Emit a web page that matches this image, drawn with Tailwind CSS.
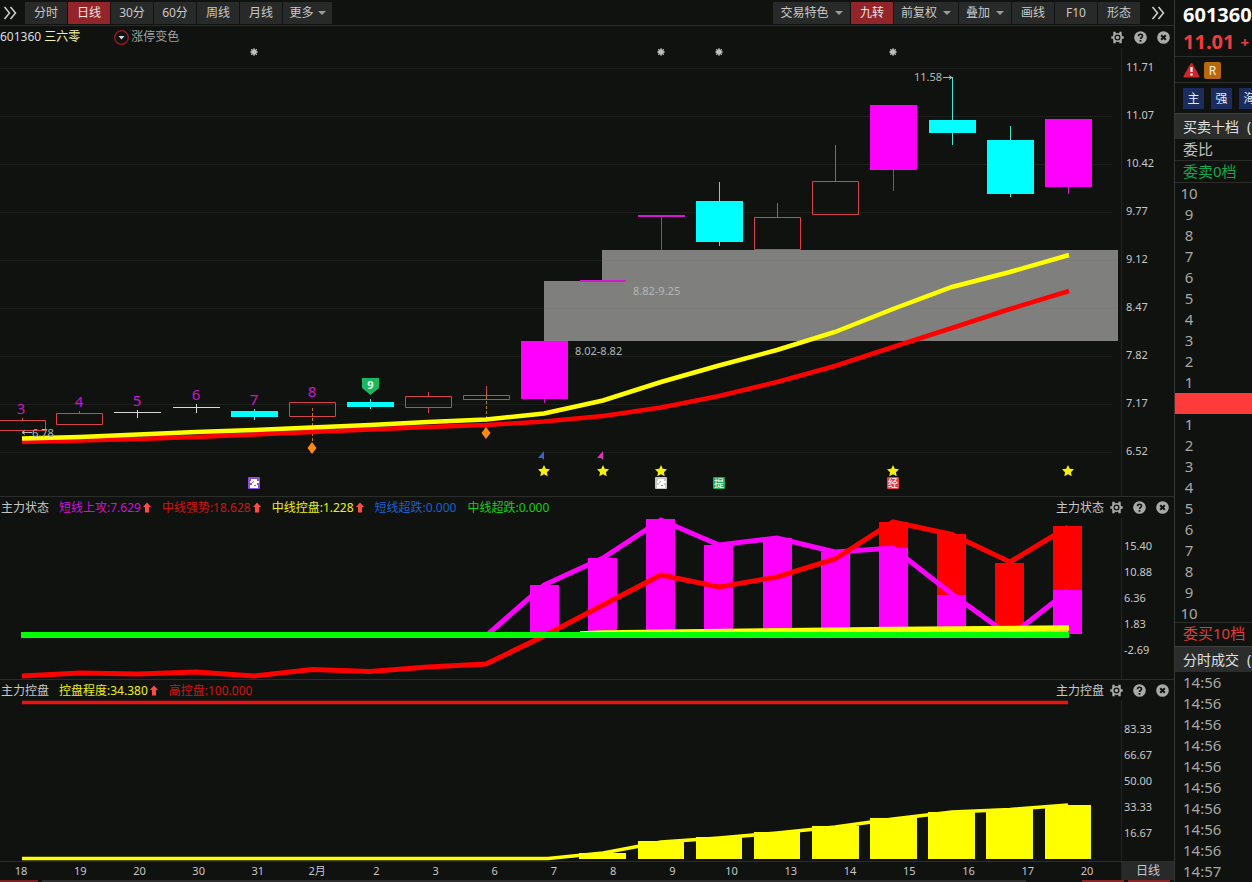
<!DOCTYPE html>
<html lang="zh-CN">
<head>
<meta charset="utf-8">
<meta name="viewport" content="width=device-width, initial-scale=1">
<title>601360 三六零 日线</title>
<script src="https://cdn.jsdelivr.net/npm/@tailwindcss/browser@4"></script>
</head>
<body class="bg-[#0f120f] font-['Noto_Sans','Noto_Sans_CJK_SC',sans-serif] text-xs text-[#c8c8c8]">

<svg class="hidden" aria-hidden="true">
  <symbol id="gear" viewBox="0 0 13 13">
    <path d="M3.500.8v11.400M9.500.8v11.400M.3 6.500h12.400" stroke="#a9aba9" stroke-width="2.400"/>
    <circle cx="6.500" cy="6.500" r="4.500" fill="#a9aba9"/>
    <circle cx="6.500" cy="6.500" r="3" fill="#0f120f"/>
    <circle cx="6.500" cy="6.500" r="1.700" fill="#a9aba9"/>
  </symbol>
  <symbol id="help" viewBox="0 0 13 13">
    <circle cx="6.500" cy="6.500" r="6.300" fill="#a9aba9"/>
    <path d="M4.500 5.200c0-2.700 4-2.600 4-.2 0 1.500-2 1.500-2 3.100" fill="none" stroke="#0f120f" stroke-width="1.600"/>
    <rect x="5.600" y="9" width="1.800" height="1.700" fill="#0f120f"/>
  </symbol>
  <symbol id="close" viewBox="0 0 13 13">
    <circle cx="6.500" cy="6.500" r="6.300" fill="#a9aba9"/>
    <path d="m4.200 4.200 4.600 4.600M8.800 4.200 4.200 8.800" stroke="#0f120f" stroke-width="2"/>
  </symbol>
  <symbol id="up" viewBox="0 0 8 11"><path d="M4 .5 8 5H6v5.500H2V5H0z" fill="#ff4a48"/></symbol>
  <symbol id="caret" viewBox="0 0 8 4"><path d="M0 0h8L4 4z" fill="#9a9c9a"/></symbol>
  <symbol id="more" viewBox="0 0 14 14"><path d="m1.500 1 5 6-5 6M7.500 1l5 6-5 6" fill="none" stroke="#d0d0d0" stroke-width="1.500"/></symbol>
  <symbol id="star" viewBox="-7 -7 14 14"><path d="M0-6 1.800-2.200 6-1.700 3 1.200 3.700 5.300 0 3.300-3.700 5.300-3 1.200-6-1.700-1.800-2.200z" fill="#f6ee10"/></symbol>
  <symbol id="flower" viewBox="-5 -5 10 10"><circle r="2.800" fill="#d4d4d4"/><path d="M0-4V4M-4 0H4M-3-3 3 3M3-3-3 3" stroke="#b8b8b8" stroke-width="1"/></symbol>
  <symbol id="diamond" viewBox="-5 -7 10 14"><path d="M0-6 4.500 0 0 6-4.500 0z" fill="#ff8a12"/></symbol>
</svg>

<div class="flex h-screen overflow-hidden">
  <main class="flex min-w-0 flex-1 flex-col">

    <nav class="flex h-[26px] shrink-0 items-center justify-between border-b border-[#2a2d2a] pl-[3px] pr-[9px] leading-5" aria-label="周期">
      <div class="flex items-center gap-px">
        <button class="mr-[7px] h-5 w-3.5" aria-label="展开"><svg class="size-3.5"><use href="#more"/></svg></button>
        <button class="h-[22px] w-[42px] bg-[#272a28]">分时</button>
        <button class="h-[22px] w-[42px] bg-[#93242a] text-[#f0e0e0]">日线</button>
        <button class="h-[22px] w-[42px] bg-[#272a28]">30分</button>
        <button class="h-[22px] w-[42px] bg-[#272a28]">60分</button>
        <button class="h-[22px] w-[42px] bg-[#272a28]">周线</button>
        <button class="h-[22px] w-[42px] bg-[#272a28]">月线</button>
        <button class="flex h-[22px] w-[49px] items-center justify-center gap-1 bg-[#272a28]">更多<svg class="h-1 w-2"><use href="#caret"/></svg></button>
      </div>
      <div class="flex items-center gap-px">
        <button class="flex h-[22px] w-[77px] items-center justify-center gap-1.5 bg-[#272a28]">交易特色<svg class="h-1 w-2"><use href="#caret"/></svg></button>
        <button class="h-[22px] w-[42px] bg-[#93242a] text-[#f0e0e0]">九转</button>
        <button class="flex h-[22px] w-16 items-center justify-center gap-1.5 bg-[#272a28]">前复权<svg class="h-1 w-2"><use href="#caret"/></svg></button>
        <button class="flex h-[22px] w-[52px] items-center justify-center gap-1.5 bg-[#272a28]">叠加<svg class="h-1 w-2"><use href="#caret"/></svg></button>
        <button class="h-[22px] w-[42px] bg-[#272a28]">画线</button>
        <button class="h-[22px] w-[42px] bg-[#272a28]">F10</button>
        <button class="h-[22px] w-[42px] bg-[#272a28]">形态</button>
        <button class="ml-[10px] h-5 w-3.5" aria-label="更多工具"><svg class="size-3.5"><use href="#more"/></svg></button>
      </div>
    </nav>

    <!-- Candles -->
    <section class="shrink-0 border-b border-[#2a2d2a]">
      <header class="flex h-[22px] items-center pr-1 leading-5">
        <span class="text-[#dedede]">601360</span>
        <span class="ml-[3px] text-[#f2f2a0]">三六零</span>
        <button class="ml-[34px] flex items-center gap-[2px] text-[#a0a2a0]">
          <svg class="size-[15px]" viewBox="0 0 15 15"><circle cx="7.500" cy="7.500" r="6.800" fill="none" stroke="#a01828" stroke-width="1.300"/><path d="M4.500 6h6l-3 3.500z" fill="#d8d8d8"/></svg>涨停变色</button>
        <div class="ml-auto flex gap-[10px]">
          <button aria-label="设置"><svg class="size-[13px]"><use href="#gear"/></svg></button>
          <button aria-label="帮助"><svg class="size-[13px]"><use href="#help"/></svg></button>
          <button aria-label="关闭"><svg class="size-[13px]"><use href="#close"/></svg></button>
        </div>
      </header>
      <div class="flex">
        <svg class="min-w-0 flex-1 overflow-visible text-[11px]" viewBox="0 48 1121 448" role="img" aria-label="K线图">
          <path d="M0 68.500H1112M0 116.500H1112M0 164.500H1112M0 212.500H1112M0 260.500H1112M0 308.500H1112M0 356.500H1112M0 404.500H1112M0 452.500H1112" stroke="#1c1f1c"/>
          <path d="M602 250H1118V341H544V281H602z" fill="#7f807e"/>
          <path d="M544 308.500H1118M602 260.500H1118" stroke="#7b7c7a"/>

          <g fill="none" stroke="#d6434a">
            <path d="M-2 420.500H45.500V430.500H-2M22.500 418V420"/>
            <path d="M56.500 413.500h46v11h-46zM79.500 411v2"/>
            <path d="M289.500 402.500h46v14h-46z"/>
            <path d="M405.500 396.500h46v11h-46zM428.500 392v4M428.500 408v5"/>
            <path d="M463.500 395.500h46v4h-46zM486.500 386v9"/>
            <path d="M754.500 217.500h46v32h-46zM777.500 203v14"/>
            <path d="M812.500 181.500h46v33h-46zM835.500 145v36"/>
          </g>
          <path d="M114 412.500h47M137.500 410v8M173 407.500h47M196.500 404v9" stroke="#d8d8d8"/>
          <path d="M254.500 409v11M370.500 399v10M719.500 182v64M952.500 77v68M1010.500 126v71" stroke="#40e8dc"/>
          <path d="M231 411h47v6h-47zM347 402h47v5h-47zM696 201h47v41h-47zM929 120h47v13h-47zM987 140h47v54h-47z" fill="#00ffff"/>
          <path d="M544.500 399v4M661.500 217v33M893.500 170v21M1068.500 187v7" stroke="#d018cc"/>
          <path d="M521 341h47v58h-47zM870 105h47v65h-47zM1045 119h47v68h-47z" fill="#ff00ff"/>
          <path d="M580 280h46v2h-46zM638 215h47v2h-47z" fill="#d818d0"/>

          <path d="M312.500 408v34M486.500 396v26" stroke="#b87418" stroke-dasharray="3 2"/>
          <polyline points="22,442 80,440.500 138,439 196,437 254,434.500 312,432 370,429.500 428,427 486,425 544,421.500 603,416 661,407.500 719,396 777,382 835,366 893,347 952,328 1010,309 1069,291" fill="none" stroke="#ff0000" stroke-width="4.500"/>
          <polyline points="22,438.500 80,437 138,434.500 196,432 254,430 312,427.500 370,425 428,422 486,419.500 544,413.500 603,400.500 661,382 719,365.500 777,350 835,332 893,309 952,287 1010,272 1069,255" fill="none" stroke="#ffff00" stroke-width="4.500"/>

          <use href="#diamond" x="307" y="441" width="10" height="14"/>
          <use href="#diamond" x="481" y="426" width="10" height="14"/>
          <path d="M362 378h17v10l-8.500 7-8.500-7z" fill="#17b860"/>
          <text x="370.500" y="389" text-anchor="middle" font-weight="700" fill="#e8ffe8">9</text>

          <g fill="#d010d0" font-size="15" text-anchor="middle">
            <text x="21" y="414">3</text><text x="79" y="407">4</text><text x="137" y="406">5</text>
            <text x="196" y="400">6</text><text x="254" y="405">7</text><text x="312" y="397">8</text>
          </g>

          <g fill="#b4b6b4">
            <text x="32" y="437">6.78</text>
            <text x="914" y="81">11.58</text>
            <text x="575" y="355">8.02-8.82</text>
            <text x="633" y="295">8.82-9.25</text>
          </g>
          <path d="M22 432.500h10M25 430.500l-3 2 3 2M943 77.500h9M949 75.500l3 2-3 2" fill="none" stroke="#b4b6b4"/>

          <use href="#flower" x="249" y="47" width="10" height="10"/>
          <use href="#flower" x="656" y="47" width="10" height="10"/>
          <use href="#flower" x="714" y="47" width="10" height="10"/>
          <use href="#flower" x="888" y="47" width="10" height="10"/>

          <path d="M544 451v9l-2-2h-4z" fill="#2c68d8"/>
          <path d="M603 451v9l-2-2h-4z" fill="#e030c8"/>
          <use href="#star" x="537" y="464" width="14" height="14"/>
          <use href="#star" x="596" y="464" width="14" height="14"/>
          <use href="#star" x="654" y="464" width="14" height="14"/>
          <use href="#star" x="886" y="464" width="14" height="14"/>
          <use href="#star" x="1061" y="464" width="14" height="14"/>

          <rect x="248" y="477" width="12" height="12" rx="1" fill="#8a50d8"/>
          <path d="M251 479h6v2h2v2h-2v2h1v3h-8v-3h2v-2h-2v-2h1z" fill="#fff"/>
          <path d="M252 482.500l2-1M254 485.500h2" stroke="#8a50d8"/>
          <rect x="655" y="477" width="12" height="12" rx="1" fill="#c8c8c8"/>
          <path d="M658 479h6v2h2v2h-2v2h1v3h-8v-3h2v-2h-2v-2h1z" fill="#fff"/>
          <path d="M659 482.500l2-1M661 485.500h2" stroke="#a0a0a0"/>
          <rect x="713" y="477" width="12" height="12" rx="1" fill="#18a860"/>
          <rect x="887" y="477" width="12" height="12" rx="1" fill="#e04048"/>
          <g font-size="10" fill="#fff" text-anchor="middle"><text x="719" y="487">提</text><text x="893" y="487">经</text></g>
        </svg>
        <div class="flex w-[53px] flex-col gap-8 border-l border-[#222522] pl-1 pt-[11px] text-[11px] leading-4">
          <span>11.71</span><span>11.07</span><span>10.42</span><span>9.77</span><span>9.12</span><span>8.47</span><span>7.82</span><span>7.17</span><span>6.52</span>
        </div>
      </div>
    </section>

    <!-- 主力状态 -->
    <section class="shrink-0 border-b border-[#2a2d2a]">
      <header class="flex h-[21px] items-center gap-[11px] whitespace-nowrap pl-px pr-[5px] leading-5">
        <h2 class="-mr-px">主力状态</h2>
        <span class="flex items-center gap-0.5 text-[#d010d4]">短线上攻:7.629<svg class="h-[11px] w-2"><use href="#up"/></svg></span>
        <span class="flex items-center gap-0.5 text-[#d01414]">中线强势:18.628<svg class="h-[11px] w-2"><use href="#up"/></svg></span>
        <span class="flex items-center gap-0.5 text-[#f0f010]">中线控盘:1.228<svg class="h-[11px] w-2"><use href="#up"/></svg></span>
        <span class="text-[#1c60cc]">短线超跌:0.000</span>
        <span class="text-[#12d012]">中线超跌:0.000</span>
        <div class="ml-auto flex items-center gap-[10px]">
          <span class="-mr-1">主力状态</span>
          <button aria-label="设置"><svg class="size-[13px]"><use href="#gear"/></svg></button>
          <button aria-label="帮助"><svg class="size-[13px]"><use href="#help"/></svg></button>
          <button aria-label="关闭"><svg class="size-[13px]"><use href="#close"/></svg></button>
        </div>
      </header>
      <div class="flex">
        <svg class="min-w-0 flex-1 overflow-visible" viewBox="0 518 1121 161" role="img" aria-label="主力状态">
          <path d="M879 522h29v112h-29zM937 534h29v100h-29zM995 563h29v71h-29zM1053 526h29v108h-29z" fill="#ff0000"/>
          <path d="M530 585h29v49h-29zM588 558h29v76h-29zM646 519h29v115h-29zM704 545h29v89h-29zM763 538h29v96h-29zM821 552h29v82h-29zM879 548h29v86h-29zM937 595h29v39h-29zM1053 590h29v44h-29z" fill="#ff00ff"/>
          <polyline points="486,636 544,585 603,558 661,520 719,545 777,538 835,552 893,548 952,594 1003,631 1017,631 1068,591" fill="none" stroke="#ff00ff" stroke-width="5"/>
          <path d="M1004 616h12v16h-12z" fill="#ff0000"/>
          <polyline points="22,676 80,673 138,674 196,672 254,676 312,669.500 370,671.500 428,667 486,664 544,636 603,605 661,575 719,587 777,577 835,559 893,522 952,534.500 1010,562 1068,527" fill="none" stroke="#ff0000" stroke-width="5"/>
          <path d="M940 631.500H1068" stroke="#f0b0b0"/>
          <polyline points="580,634 603,633 893,629.500 1069,628" fill="none" stroke="#ffff00" stroke-width="5.500"/>
          <path d="M21 635H1069" stroke="#00ff00" stroke-width="6"/>
        </svg>
        <div class="flex w-[53px] flex-col gap-[10px] border-l border-[#222522] pl-0.5 pt-5 text-[11px] leading-4">
          <span>15.40</span><span>10.88</span><span>6.36</span><span>1.83</span><span>-2.69</span>
        </div>
      </div>
    </section>

    <!-- 主力控盘 -->
    <section class="shrink-0 border-b border-[#2a2d2a]">
      <header class="flex h-[21px] items-center gap-[11px] whitespace-nowrap pl-px pr-[5px] leading-5">
        <h2 class="-mr-px">主力控盘</h2>
        <span class="flex items-center gap-0.5 text-[#f0f010]">控盘程度:34.380<svg class="h-[11px] w-2"><use href="#up"/></svg></span>
        <span class="text-[#d01414]">高控盘:100.000</span>
        <div class="ml-auto flex items-center gap-[10px]">
          <span class="-mr-1">主力控盘</span>
          <button aria-label="设置"><svg class="size-[13px]"><use href="#gear"/></svg></button>
          <button aria-label="帮助"><svg class="size-[13px]"><use href="#help"/></svg></button>
          <button aria-label="关闭"><svg class="size-[13px]"><use href="#close"/></svg></button>
        </div>
      </header>
      <div class="flex">
        <svg class="min-w-0 flex-1 overflow-visible" viewBox="0 701 1121 160" role="img" aria-label="主力控盘">
          <path d="M22 702.500H1068" stroke="#ec100e" stroke-width="3.500"/>
          <path d="M579 853h47v6h-47zM638 841h46v18h-46zM696 837h46v22h-46zM754 832h46v27h-46zM812 826h47v33h-47zM870 818h47v41h-47zM928 812h47v47h-47zM986 809h47v50h-47zM1045 805h46v54h-46z" fill="#ffff00"/>
          <polyline points="22,858.500 548,858.500 603,853 661,842 719,838 777,833 835,827 893,819 952,812 1010,809.500 1068,805" fill="none" stroke="#ffff00" stroke-width="3.500"/>
        </svg>
        <div class="flex w-[53px] flex-col gap-[10px] border-l border-[#222522] pl-0.5 pt-5 text-[11px] leading-4">
          <span>83.33</span><span>66.67</span><span>50.00</span><span>33.33</span><span>16.67</span>
        </div>
      </div>
    </section>

    <div class="flex h-[18px] shrink-0 text-[11px] leading-[18px]">
      <div class="flex min-w-0 flex-1 justify-between pl-px pr-[14px] text-center">
        <span class="w-10">18</span><span class="w-10">19</span><span class="w-10">20</span><span class="w-10">30</span><span class="w-10">31</span><span class="w-10">2月</span><span class="w-10">2</span><span class="w-10">3</span><span class="w-10">6</span><span class="w-10">7</span><span class="w-10">8</span><span class="w-10">9</span><span class="w-10">10</span><span class="w-10">13</span><span class="w-10">14</span><span class="w-10">15</span><span class="w-10">16</span><span class="w-10">17</span><span class="w-10">20</span>
      </div>
      <button class="w-[53px] border-l border-[#222522] bg-[#272a28] text-xs leading-[18px]">日线</button>
    </div>
    <div class="flex h-0.5 shrink-0 gap-1 pr-1">
      <span class="w-[38px] bg-[#7a2024]"></span>
      <span class="flex-1 bg-[#2c2f2d]"></span>
      <span class="w-12"></span>
      <span class="w-[42px] bg-[#8a2226]"></span>
      <span class="w-[42px] bg-[#8a2226]"></span>
    </div>
  </main>

  <aside class="w-[78px] shrink-0 overflow-hidden whitespace-nowrap border-l border-[#343734] text-[15px] text-[#a6a8a6]">
    <h1 class="mt-px h-7 pl-2 text-xl font-bold leading-7 text-white">601360</h1>
    <div class="flex h-7 items-start gap-1.5 border-b border-[#2a2d2a] pl-2 font-bold leading-[26px] text-[#f03c3c]"><span class="text-xl leading-[26px]">11.01</span><span>+</span></div>
    <div class="flex h-[26px] items-center gap-1 border-b border-[#2a2d2a] pl-2 pt-px">
      <svg class="h-[15px] w-[17px]" viewBox="0 0 17 15"><path d="M8.500 1 1.500 13.500h14z" fill="#c8282e" stroke="#c8282e" stroke-width="2" stroke-linejoin="round"/><path d="M8.500 4v5M8.500 10.500v2" stroke="#fff" stroke-width="2.200"/></svg>
      <span class="size-[17px] rounded-xs bg-[#b8680c] text-center text-xs leading-[17px] text-[#fff0d8]">R</span>
    </div>
    <div class="flex h-[30px] items-center gap-[7px] pl-2 text-xs leading-[21px] text-[#e8ecf8]">
      <button class="size-[21px] shrink-0 bg-[#1c2c5c]">主</button>
      <button class="size-[21px] shrink-0 bg-[#1c2c5c]">强</button>
      <button class="size-[21px] shrink-0 bg-[#1c2c5c]">海</button>
    </div>
    <h2 class="flex h-[26px] gap-2 border-t border-[#3c3f3c] bg-[#2a2d2b] pl-2 text-sm leading-[25px] text-[#e0e0e0]"><span>买卖十档</span><span>(</span></h2>
    <p class="h-[22px] border-b border-[#2a2d2a] pl-2 leading-[21px] text-[#c0c0c0]">委比</p>
    <p class="h-[22px] border-b border-[#2a2d2a] pl-2 leading-[21px] text-[#10a850]">委卖0档</p>
    <ol class="w-7 text-center leading-[21px]">
      <li>10</li><li>9</li><li>8</li><li>7</li><li>6</li><li>5</li><li>4</li><li>3</li><li>2</li><li>1</li>
    </ol>
    <div class="h-[21px] bg-[#ff3a3a]"></div>
    <ol class="w-7 text-center leading-[21px]">
      <li>1</li><li>2</li><li>3</li><li>4</li><li>5</li><li>6</li><li>7</li><li>8</li><li>9</li><li>10</li>
    </ol>
    <p class="-mt-0.5 h-6 border-t border-[#2a2d2a] pl-2 leading-[21px] text-[#e03c3c]">委买10档</p>
    <h2 class="flex h-[26px] gap-2 border-t border-[#3c3f3c] bg-[#2a2d2b] pl-2 text-sm leading-[25px] text-[#e0e0e0]"><span>分时成交</span><span>(</span></h2>
    <ol class="pl-2 leading-[21px]">
      <li>14:56</li><li>14:56</li><li>14:56</li><li>14:56</li><li>14:56</li><li>14:56</li><li>14:56</li><li>14:56</li><li>14:56</li><li>14:57</li>
    </ol>
  </aside>
</div>
</body>
</html>
